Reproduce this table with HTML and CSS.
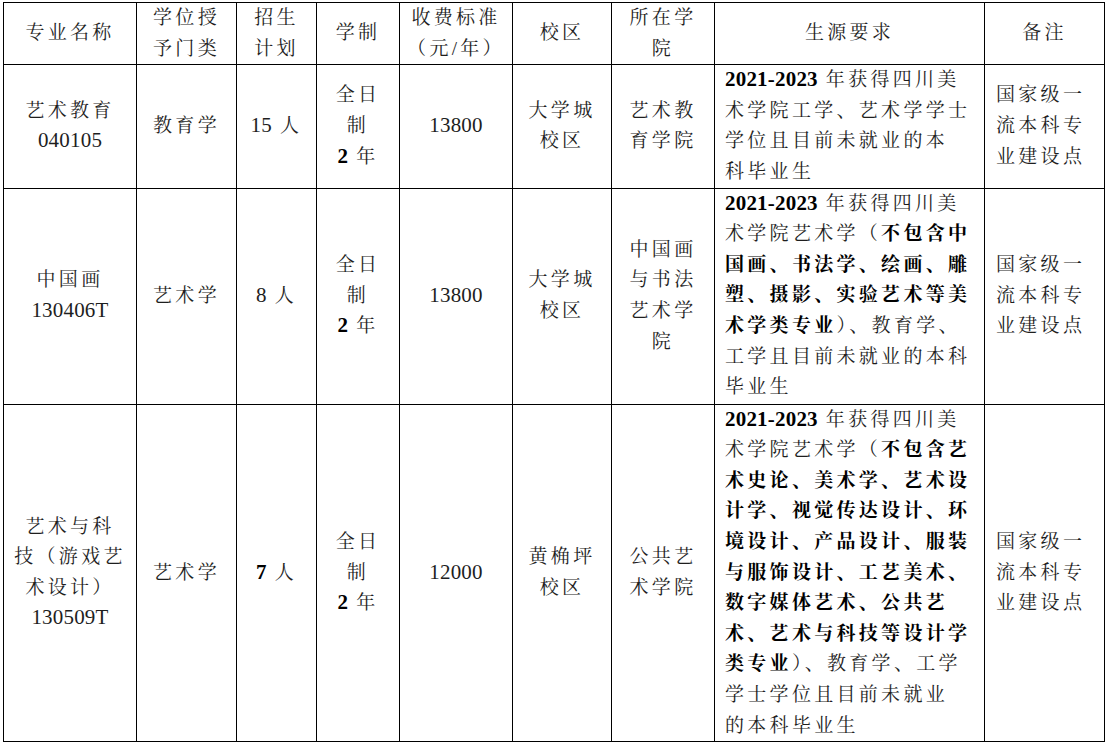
FILE: index.html
```html
<!DOCTYPE html>
<html lang="zh-CN">
<head>
<meta charset="utf-8">
<title>招生专业</title>
<link rel="stylesheet" href="styles.css">
</head>
<body>
<table class="plan">
  <colgroup>
    <col class="c1"><col class="c2"><col class="c3"><col class="c4"><col class="c5">
    <col class="c6"><col class="c7"><col class="c8"><col class="c9">
  </colgroup>
  <thead>
    <tr class="head">
      <th>专业名称</th>
      <th>学位授<br>予门类</th>
      <th>招生<br>计划</th>
      <th>学制</th>
      <th>收费标准<br>（元/年）</th>
      <th>校区</th>
      <th>所在学<br>院</th>
      <th>生源要求</th>
      <th>备注</th>
    </tr>
  </thead>
  <tbody>
    <tr class="r1">
      <td>艺术教育<br><span class="n">040105</span></td>
      <td>教育学</td>
      <td><span class="n">15</span> 人</td>
      <td>全日<br>制<br><span class="n b">2</span> 年</td>
      <td><span class="n">13800</span></td>
      <td>大学城<br>校区</td>
      <td>艺术教<br>育学院</td>
      <td class="req"><span class="n b">2021-2023</span> 年获得四川美<br>术学院工学、艺术学学士<br>学位且目前未就业的本<br>科毕业生</td>
      <td class="note">国家级一<br>流本科专<br>业建设点</td>
    </tr>
    <tr class="r2">
      <td>中国画<br><span class="n">130406T</span></td>
      <td>艺术学</td>
      <td><span class="n">8</span> 人</td>
      <td>全日<br>制<br><span class="n b">2</span> 年</td>
      <td><span class="n">13800</span></td>
      <td>大学城<br>校区</td>
      <td>中国画<br>与书法<br>艺术学<br>院</td>
      <td class="req"><span class="n b">2021-2023</span> 年获得四川美<br>术学院艺术学（<b>不包含中<br>国画、书法学、绘画、雕<br>塑、摄影、实验艺术等美<br>术学类专业</b>）、教育学、<br>工学且目前未就业的本科<br>毕业生</td>
      <td class="note">国家级一<br>流本科专<br>业建设点</td>
    </tr>
    <tr class="r3">
      <td>艺术与科<br>技（游戏艺<br>术设计）<br><span class="n">130509T</span></td>
      <td>艺术学</td>
      <td><span class="n b">7</span> 人</td>
      <td>全日<br>制<br><span class="n b">2</span> 年</td>
      <td><span class="n">12000</span></td>
      <td>黄桷坪<br>校区</td>
      <td>公共艺<br>术学院</td>
      <td class="req"><span class="n b">2021-2023</span> 年获得四川美<br>术学院艺术学（<b>不包含艺<br>术史论、美术学、艺术设<br>计学、视觉传达设计、环<br>境设计、产品设计、服装<br>与服饰设计、工艺美术、<br>数字媒体艺术、公共艺<br>术、艺术与科技等设计学<br>类专业</b>）、教育学、工学<br>学士学位且目前未就业<br>的本科毕业生</td>
      <td class="note">国家级一<br>流本科专<br>业建设点</td>
    </tr>
  </tbody>
</table>
</body>
</html>
```

FILE: styles.css
```css
html, body {
  margin: 0;
  padding: 0;
  background: #fff;
}

body {
  padding: 2px 0 0 3px;
  font-family: "Liberation Serif", "Noto Serif CJK SC", "Noto Sans CJK SC", serif;
  font-size: 19px;
  color: #1e1e1e;
}

.plan {
  border-collapse: collapse;
  table-layout: fixed;
  width: 1101px;
}

.c1 { width: 133px; }
.c2 { width: 100px; }
.c3 { width: 80px; }
.c4 { width: 83px; }
.c5 { width: 113px; }
.c6 { width: 99px; }
.c7 { width: 103px; }
.c8 { width: 270px; }
.c9 { width: 120px; }

.plan th,
.plan td {
  border: 1px solid #000;
  padding: 0 2px;
  text-align: center;
  vertical-align: middle;
  font-weight: normal;
  line-height: 30.6px;
  letter-spacing: 3.3px;
  white-space: nowrap;
}

.head { height: 61px; }
.r1 { height: 122px; }
.r2 { height: 216px; }
.r3 { height: 337px; }

.plan td.req {
  text-align: left;
  padding-left: 10px;
  vertical-align: top;
}

.plan td.note {
  text-align: left;
  padding-left: 11px;
}

.n {
  font-size: 21px;
  line-height: 1;
  letter-spacing: 0.2px;
}

.b {
  font-weight: bold;
  color: #000;
}

b {
  font-weight: bold;
  color: #000;
}
```
